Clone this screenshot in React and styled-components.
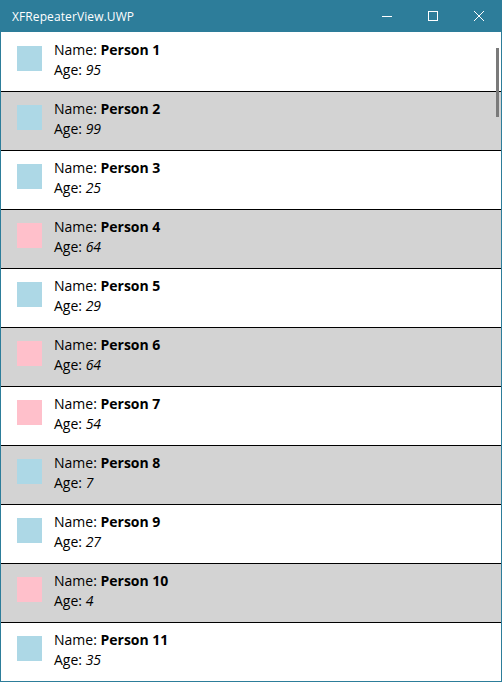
import React from 'react';
import styled, { createGlobalStyle } from 'styled-components';

const GlobalStyle = createGlobalStyle`
  html, body {
    margin: 0;
    padding: 0;
    background: #ffffff;
  }
`;

const ACCENT = '#2d7d9a';

const people = [
  { name: 'Person 1', age: 95, color: 'lightblue' },
  { name: 'Person 2', age: 99, color: 'lightblue' },
  { name: 'Person 3', age: 25, color: 'lightblue' },
  { name: 'Person 4', age: 64, color: 'pink' },
  { name: 'Person 5', age: 29, color: 'lightblue' },
  { name: 'Person 6', age: 64, color: 'pink' },
  { name: 'Person 7', age: 54, color: 'pink' },
  { name: 'Person 8', age: 7, color: 'lightblue' },
  { name: 'Person 9', age: 27, color: 'lightblue' },
  { name: 'Person 10', age: 4, color: 'pink' },
  { name: 'Person 11', age: 35, color: 'lightblue' },
];

const Window = styled.div`
  width: 502px;
  height: 682px;
  box-sizing: border-box;
  display: flex;
  flex-direction: column;
  border: 1px solid ${ACCENT};
  border-top: none;
  overflow: hidden;
  font-family: 'Open Sans', 'Noto Sans', sans-serif;
`;

const TitleBar = styled.div`
  height: 32px;
  flex: none;
  margin: 0 -1px;
  display: flex;
  align-items: center;
  background: ${ACCENT};
  color: #ffffff;
`;

const Title = styled.span`
  flex: 1;
  padding-left: 12px;
  font-size: 12px;
  letter-spacing: 0.1px;
`;

const CaptionButton = styled.div`
  width: 46px;
  height: 32px;
  display: flex;
  align-items: center;
  justify-content: center;
`;

const List = styled.div`
  position: relative;
  flex: 1;
  overflow: hidden;
  padding-top: 1px;
`;

const Row = styled.div`
  height: 58px;
  flex: none;
  display: flex;
  align-items: flex-start;
  border-bottom: 1px solid #000000;
  background: ${(p) => (p.$alt ? '#d3d3d3' : '#ffffff')};
`;

const Swatch = styled.div`
  width: 25px;
  height: 25px;
  margin: 13px 12px 0 16px;
  background: ${(p) => p.$color};
`;

const Info = styled.div`
  padding-top: 7px;
  font-size: 14px;
  line-height: 20px;
  color: #000000;
`;

const Line = styled.div``;

const Scrollbar = styled.div`
  position: absolute;
  top: 16px;
  right: 2px;
  width: 3px;
  height: 69px;
  background: #7a7a7a;
`;

const App = () => {
  return (
    <>
      <GlobalStyle />
      <Window>
        <TitleBar>
          <Title>XFRepeaterView.UWP</Title>
          <CaptionButton>
            <svg width='10' height='10' viewBox='0 0 10 10'>
              <path d='M0 5.5h10' stroke='#fff' strokeWidth='1' />
            </svg>
          </CaptionButton>
          <CaptionButton>
            <svg width='10' height='10' viewBox='0 0 10 10'>
              <rect x='0.5' y='0.5' width='9' height='9' fill='none' stroke='#fff' strokeWidth='1' />
            </svg>
          </CaptionButton>
          <CaptionButton>
            <svg width='10' height='10' viewBox='0 0 10 10'>
              <path d='M0 0L10 10M10 0L0 10' stroke='#fff' strokeWidth='1' />
            </svg>
          </CaptionButton>
        </TitleBar>
        <List>
          {people.map((p, i) => (
            <Row key={p.name} $alt={i % 2 === 1}>
              <Swatch $color={p.color} />
              <Info>
                <Line>
                  Name: <b>{p.name}</b>
                </Line>
                <Line>
                  Age: <i>{p.age}</i>
                </Line>
              </Info>
            </Row>
          ))}
          <Scrollbar />
        </List>
      </Window>
    </>
  );
};

export default App;
